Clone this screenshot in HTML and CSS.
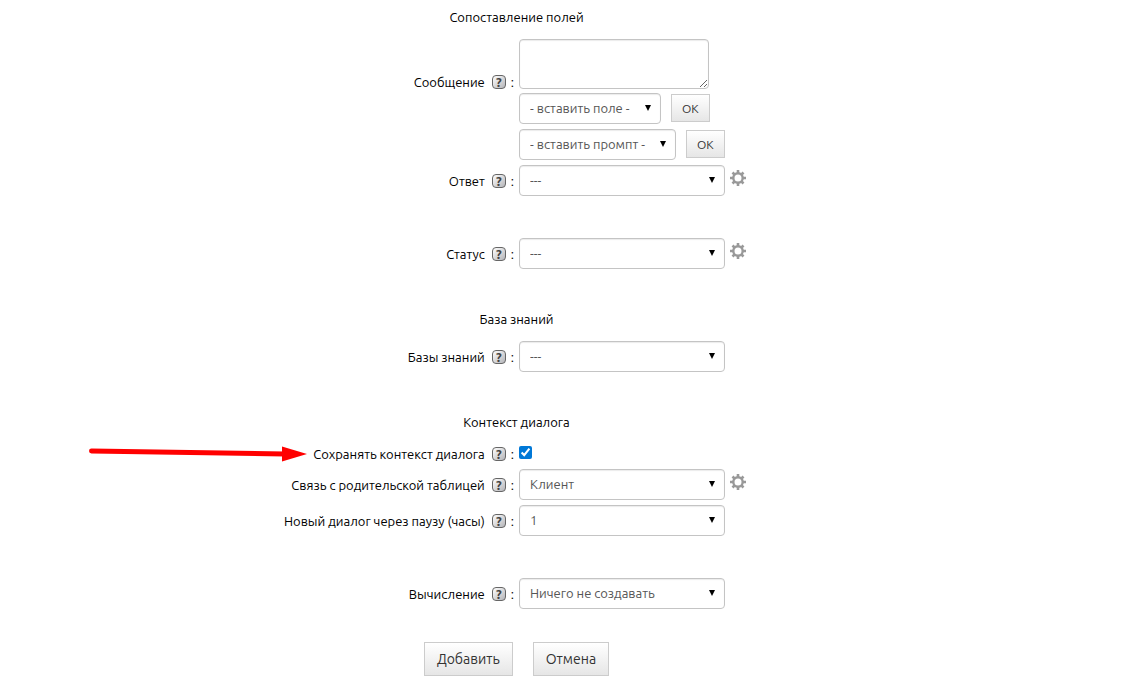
FILE: index.html
```html
<!DOCTYPE html>
<html lang="ru">
<head>
  <meta charset="UTF-8" />
  <meta name="viewport" content="width=device-width, initial-scale=1.0" />
  <title>Сопоставление полей</title>
  <link rel="stylesheet" href="styles.css">
</head>
<body>
  <svg class="sprite">
    <symbol id="gear" viewBox="0 0 16 16">
      <circle cx="8" cy="8" r="4.7" fill="none" stroke="#999" stroke-width="2.4" />
      <path d="M8 0v3M8 13v3M0 8h3M13 8h3M2.5 2.5l2 2M11.5 11.5l2 2M2.5 13.5l2-2M11.5 4.5l2-2" stroke="#999" stroke-width="2.6" />
    </symbol>
  </svg>

  <form class="settings">
    <h3>Сопоставление полей</h3>
    <div class="row row-top">
      <div class="name"><label for="message">Сообщение</label><button type="button" class="help">?</button>:</div>
      <div class="field"><textarea id="message"></textarea></div>
    </div>
    <div class="row">
      <div class="field insert">
        <div class="select insert-field"><select aria-label="вставить поле"><option>- вставить поле -</option></select></div>
        <button type="button" class="btn btn-small">OK</button>
      </div>
    </div>
    <div class="row">
      <div class="field insert">
        <div class="select insert-prompt"><select aria-label="вставить промпт"><option>- вставить промпт -</option></select></div>
        <button type="button" class="btn btn-small">OK</button>
      </div>
    </div>
    <div class="row">
      <div class="name"><label for="answer">Ответ</label><button type="button" class="help">?</button>:</div>
      <div class="field">
        <div class="select"><select id="answer"><option>---</option></select></div>
        <button type="button" class="gear"><svg><use href="#gear" /></svg></button>
      </div>
    </div>
    <div class="row row-spaced">
      <div class="name"><label for="status">Статус</label><button type="button" class="help">?</button>:</div>
      <div class="field">
        <div class="select"><select id="status"><option>---</option></select></div>
        <button type="button" class="gear"><svg><use href="#gear" /></svg></button>
      </div>
    </div>

    <h3>База знаний</h3>
    <div class="row">
      <div class="name"><label for="bases">Базы знаний</label><button type="button" class="help">?</button>:</div>
      <div class="field">
        <div class="select"><select id="bases"><option>---</option></select></div>
      </div>
    </div>

    <h3>Контекст диалога</h3>
    <div class="row">
      <div class="name">
        <svg class="pointer" viewBox="0 0 218 16">
          <path d="M2.5 5L196 8" stroke="#f00" stroke-width="5" stroke-linecap="round" />
          <path d="M193 0.5L218 8L193 15.5z" fill="#f00" />
        </svg>
        <label for="context">Сохранять контекст диалога</label><button type="button" class="help">?</button>:
      </div>
      <div class="field"><input type="checkbox" id="context" checked /></div>
    </div>
    <div class="row">
      <div class="name"><label for="parent">Связь с родительской таблицей</label><button type="button" class="help">?</button>:</div>
      <div class="field">
        <div class="select"><select id="parent"><option>Клиент</option></select></div>
        <button type="button" class="gear"><svg><use href="#gear" /></svg></button>
      </div>
    </div>
    <div class="row">
      <div class="name"><label for="pause">Новый диалог через паузу (часы)</label><button type="button" class="help">?</button>:</div>
      <div class="field">
        <div class="select"><select id="pause"><option>1</option></select></div>
      </div>
    </div>
    <div class="row row-spaced">
      <div class="name"><label for="calc">Вычисление</label><button type="button" class="help">?</button>:</div>
      <div class="field">
        <div class="select"><select id="calc"><option>Ничего не создавать</option></select></div>
      </div>
    </div>

    <div class="actions">
      <button type="button" class="btn">Добавить</button>
      <button type="button" class="btn">Отмена</button>
    </div>
  </form>
</body>
</html>
```
FILE: styles.css
```css
* {
  box-sizing: border-box;
}
body {
  margin: 0;
  background: #fff;
  color: #000;
  font: 13px/20px "Ubuntu", "Noto Sans", sans-serif;
}
button, select, textarea {
  font-family: inherit;
  font-size: 13px;
}
.sprite {
  display: none;
}
.settings {
  margin-right: 100px;
  padding: 7px 0 10px;
}
h3 {
  margin: 0 0 12px;
  font-size: 13px;
  font-weight: normal;
  text-align: center;
}
.row + h3 {
  margin-top: 40px;
}
.row {
  display: grid;
  grid-template-columns: 1fr 1fr;
  column-gap: 5px;
  align-items: center;
}
.row + .row {
  margin-top: 5px;
}
.row-top {
  align-items: end;
  line-height: 14px;
}
.row-top + .row {
  margin-top: 4px;
}
.row + .row-spaced {
  margin-top: 42px;
}
.name {
  position: relative;
  display: flex;
  justify-content: flex-end;
  align-items: center;
}
.field {
  display: flex;
  grid-column: 2;
}
.help {
  width: 14px;
  height: 14px;
  margin: 0 5px 0 7px;
  padding: 0;
  border: 1px solid #666;
  border-radius: 4px;
  background: linear-gradient(135deg, #fff, #b4b4b8);
  color: #444;
  font-size: 13px;
  font-weight: bold;
  line-height: 12px;
}
textarea {
  display: block;
  width: 190px;
  height: 50px;
  border: 1px solid #c4c4c4;
  border-radius: 4px;
  box-shadow: inset 0 1px 1px rgba(0, 0, 0, 0.08);
}
.select {
  position: relative;
  width: 206px;
}
.select::after {
  content: "";
  position: absolute;
  top: 12px;
  right: 10px;
  border: solid transparent;
  border-width: 6px 3px 0;
  border-top-color: #000;
  pointer-events: none;
}
.insert {
  gap: 10px;
}
.insert-field {
  width: 142px;
}
.insert-prompt {
  width: 157px;
}
select {
  display: block;
  width: 100%;
  height: 31px;
  padding: 0 10px 2px;
  appearance: none;
  border: 1px solid #c4c4c4;
  border-radius: 4px;
  background: #fff;
  box-shadow: inset 0 1px 1px rgba(0, 0, 0, 0.08);
  color: #555;
}
.gear {
  width: 16px;
  height: 16px;
  margin: 5px 0 0 5px;
  padding: 0;
  border: 0;
  background: none;
}
.gear svg {
  display: block;
  width: 16px;
  height: 16px;
}
input[type="checkbox"] {
  width: 13px;
  height: 13px;
  margin: 0 0 3px;
  accent-color: #0078d7;
}
/* red arrow in front of the context option */
.pointer {
  position: absolute;
  right: 207px;
  width: 218px;
  height: 16px;
}
.btn {
  height: 34px;
  padding: 0 12px;
  border: 1px solid #ccc;
  background: linear-gradient(#fff, #e6e6e6);
  color: #333;
  font-size: 14px;
}
.btn-small {
  height: 28px;
  margin-top: 1px;
  padding: 0 10px;
  font-size: 12px;
}
.actions {
  display: flex;
  justify-content: center;
  gap: 20px;
  margin-top: 33px;
}
```
